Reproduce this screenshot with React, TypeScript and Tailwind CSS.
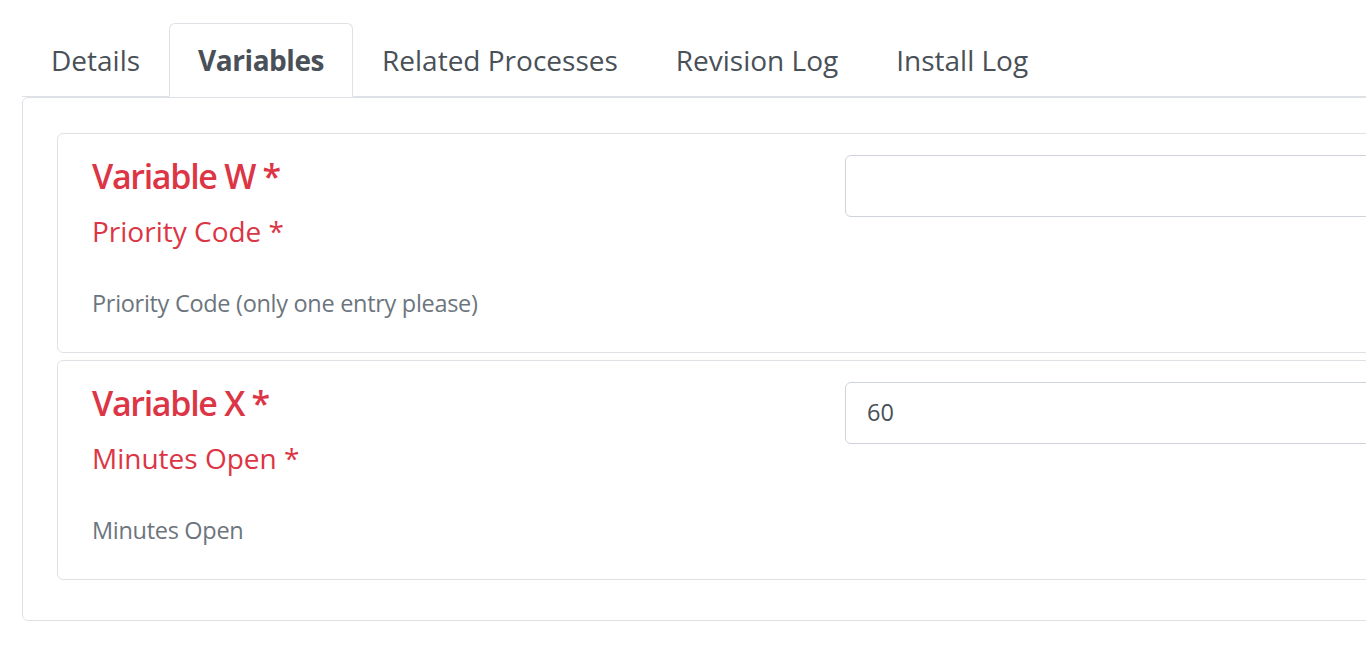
import React from "react";

const tabs = ["Details", "Variables", "Related Processes", "Revision Log", "Install Log"];

function VarCard({ title, label, help, value }: { title: string; label: string; help: string; value: string }) {
  return (
    <div className="border border-[#dee2e6] rounded-[6px] bg-white">
      <div className="flex pt-[21px] pl-[34px] pb-[30px]">
        <div className="w-[753px] shrink-0">
          <div className="text-[34px] leading-[42px] font-semibold tracking-[-1.3px] text-[#dc3545]">{title}</div>
          <div className="mt-[13px] text-[28px] leading-[42px] text-[#dc3545]">{label}</div>
          <div className="mt-[33px] text-[23.5px] leading-[37px] tracking-[-0.3px] text-[#6c757d]">{help}</div>
        </div>
        <div className="flex-1">
          <div className="h-[62px] w-[700px] border border-[#ced4da] rounded-[6px] bg-white flex items-center pl-[21px] text-[23.5px] text-[#495057]">
            {value}
          </div>
        </div>
      </div>
    </div>
  );
}

export default function App() {
  return (
    <div
      className="w-[1366px] h-[653px] overflow-hidden bg-white"
      style={{ fontFamily: '"Open Sans", "Noto Sans", sans-serif' }}
    >
      <div className="pl-[22px] pt-[23px] w-[1600px]">
        <ul className="flex border-b border-[#dee2e6]">
          {tabs.map((t) => {
            const active = t === "Variables";
            return (
              <li
                key={t}
                className={
                  active
                    ? "-mb-px h-[74px] px-[28px] flex items-center border border-[#dee2e6] border-b-white rounded-t-[6px] bg-white text-[28px] font-bold tracking-[-0.45px] text-[#495057]"
                    : "-mb-px h-[74px] px-[28px] flex items-center border border-transparent text-[28px] text-[#495057]"
                }
              >
                {t}
              </li>
            );
          })}
        </ul>
        <div className="border border-[#dee2e6] rounded-[6px] pt-[35px] pb-[40px] pl-[34px]">
          <div className="flex flex-col gap-[7px]">
            <VarCard
              title="Variable W *"
              label="Priority Code *"
              help="Priority Code (only one entry please)"
              value=""
            />
            <VarCard title="Variable X *" label="Minutes Open *" help="Minutes Open" value="60" />
          </div>
        </div>
      </div>
    </div>
  );
}
